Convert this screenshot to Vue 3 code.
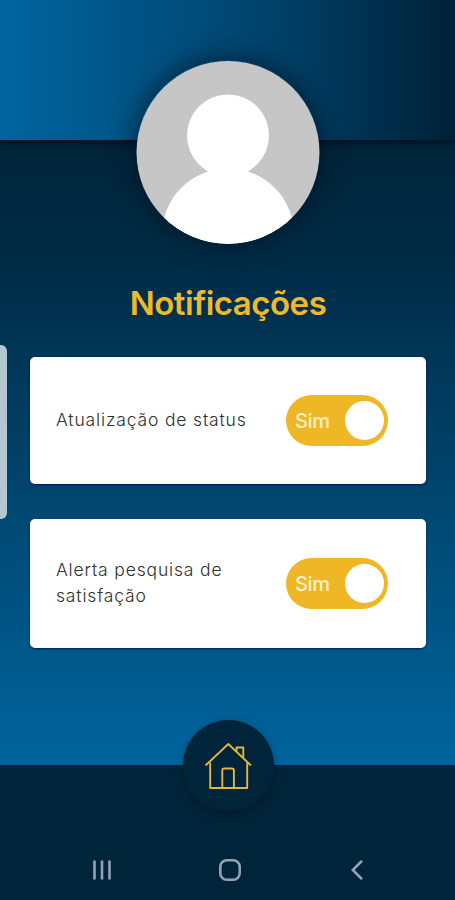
<template>
  <div class="screen">
    <header class="header">
      <svg class="avatar" viewBox="0 0 184 184">
        <defs>
          <clipPath id="avatar-clip">
            <circle cx="92" cy="92.5" r="91.5" />
          </clipPath>
        </defs>
        <g clip-path="url(#avatar-clip)">
          <rect width="184" height="184" fill="#c6c6c6" />
          <circle cx="92" cy="75.5" r="41" fill="#fff" />
          <circle cx="92" cy="174.500" r="66" fill="#fff" />
        </g>
      </svg>
    </header>

    <main class="content">
      <h1 class="title">Notificações</h1>
      <div class="cards">
        <section v-for="item in items" :key="item.id" class="card" :class="item.id">
          <span class="label">{{ item.label }}</span>
          <button
            class="toggle"
            :class="{ off: !item.enabled }"
            role="switch"
            :aria-checked="item.enabled"
            @click="toggle(item)"
          >
            <span class="toggle-text">{{ item.enabled ? 'Sim' : 'Não' }}</span>
            <span class="knob" />
          </button>
        </section>
      </div>
    </main>

    <div class="edge-handle" />

    <footer class="footer">
      <button class="home">
        <svg width="48" height="48" viewBox="0 0 48 48">
          <g fill="none" stroke="#e3b544" stroke-width="1.9" stroke-linejoin="round">
            <path d="M6.200 20.500V46h37V20.500" />
            <path d="M1.500 23.500 24.300 2 47 23.500" />
            <path d="M32.500 9V5.500h6.800V15.500" />
            <path d="M18.300 46V28.500q0-2 2-2h7.600q2 0 2 2V46" />
          </g>
        </svg>
      </button>
      <nav class="system-bar">
        <svg class="recents" viewBox="0 0 20 20">
          <path d="M2.500 .5v19M10 .5v19M17.500 .5v19" />
        </svg>
        <svg class="round" viewBox="0 0 22 22">
          <rect x="1.300" y="1.300" width="19.400" height="19.400" rx="6.500" />
        </svg>
        <svg class="back" viewBox="0 0 12 20">
          <path d="M11 .8 1.800 10l9.200 9.200" />
        </svg>
      </nav>
    </footer>
  </div>
</template>

<script setup>
import { ref } from 'vue';

const items = ref([
  { id: 'status', label: 'Atualização de status', enabled: true },
  { id: 'survey', label: 'Alerta pesquisa de satisfação', enabled: true }
]);

const toggle = (item) => {
  item.enabled = !item.enabled;
};
</script>

<style>
body {
  margin: 0;
}
</style>

<style scoped>
.screen {
  position: relative;
  display: flex;
  flex-direction: column;
  height: 900px;
  overflow: hidden;
  font-family: Inter, "Liberation Sans", sans-serif;
  background: #002439;
}

.header {
  position: relative;
  z-index: 1;
  flex: none;
  display: flex;
  justify-content: center;
  height: 140px;
  background: linear-gradient(90deg, #00659f 0%, #00426a 60%, #002137 100%);
  box-shadow: 0 2px 8px rgba(0, 8, 20, 0.8);
}

.avatar {
  flex: none;
  width: 184px;
  height: 184px;
  margin: 60px 0 0 1px;
  border-radius: 50%;
  box-shadow: 0 0 26px rgba(0, 15, 30, 0.75);
}

.content {
  flex: none;
  box-sizing: border-box;
  height: 625px;
  padding: 143px 29px 0 30px;
  background: linear-gradient(180deg, #002439 0%, #002c46 20%, #00639c 98%);
}

.title {
  margin: 0;
  color: #efb92d;
  font-size: 33px;
  font-weight: 600;
  line-height: 40px;
  letter-spacing: -0.5px;
  text-align: center;
}

.cards {
  display: flex;
  flex-direction: column;
  gap: 35px;
  margin-top: 34px;
}

.card {
  display: flex;
  align-items: center;
  justify-content: space-between;
  box-sizing: border-box;
  height: 127px;
  padding: 0 38px 0 26px;
  background: #fff;
  border-radius: 5px;
  box-shadow: 0 1px 2px rgba(0, 0, 60, 0.7);
}

.card.survey {
  height: 129px;
}

.label {
  width: 200px;
  padding-bottom: 2px;
  color: #303030;
  font-size: 17.5px;
  font-weight: 300;
  line-height: 26px;
  letter-spacing: 0.84px;
}

.toggle {
  display: flex;
  align-items: center;
  justify-content: space-between;
  box-sizing: border-box;
  width: 102px;
  height: 51px;
  padding: 0 4px 0 9px;
  border: 0;
  border-radius: 26px;
  background: #efb625;
  font-family: inherit;
  cursor: pointer;
}

.toggle.off {
  flex-direction: row-reverse;
  padding: 0 9px 0 4px;
  background: #b5b5b5;
}

.toggle-text {
  color: #fff0ca;
  font-size: 20px;
  font-weight: 500;
  letter-spacing: -0.4px;
}

.knob {
  width: 39px;
  height: 39px;
  border-radius: 50%;
  background: #fff;
}

.edge-handle {
  position: absolute;
  z-index: 2;
  top: 345px;
  left: 0;
  width: 7px;
  height: 174px;
  border-radius: 0 6px 6px 0;
  background: #b4c6d0;
}

.footer {
  position: relative;
  flex: none;
  display: flex;
  flex-direction: column;
  align-items: center;
  height: 135px;
  background: #002439;
}

.home {
  display: flex;
  flex: none;
  align-items: center;
  justify-content: center;
  width: 91px;
  height: 91px;
  margin: -45px 0 0 1px;
  padding: 0;
  border: 0;
  border-radius: 50%;
  background: #002439;
  box-shadow: 0 3px 8px rgba(0, 15, 30, 0.35);
  cursor: pointer;
}

.system-bar {
  display: flex;
  align-items: center;
  justify-content: space-between;
  box-sizing: border-box;
  width: 100%;
  margin-top: 48px;
  padding: 0 92px;
}

.system-bar svg {
  fill: none;
  stroke: #92a3b5;
  stroke-width: 2.6;
}

.recents {
  width: 20px;
  height: 20px;
}

.round {
  width: 22px;
  height: 22px;
  margin-right: 4px;
}

.back {
  width: 12px;
  height: 20px;
}
</style>
